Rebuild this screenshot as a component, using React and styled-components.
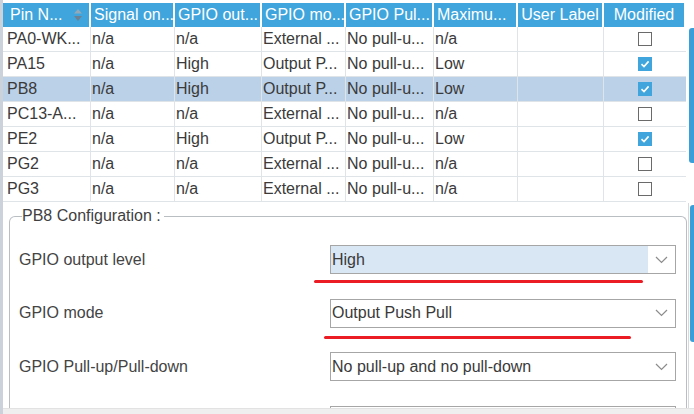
import React from 'react';
import styled, { createGlobalStyle } from 'styled-components';

const GlobalStyle = createGlobalStyle`
  html, body {
    margin: 0;
    padding: 0;
    background: #ffffff;
  }
  body {
    font-family: "Liberation Sans", Arial, sans-serif;
  }
`;

const columns = [
  { title: 'Pin N...', width: 88, sort: true },
  { title: 'Signal on...', width: 84 },
  { title: 'GPIO out...', width: 87 },
  { title: 'GPIO mo...', width: 84 },
  { title: 'GPIO Pul...', width: 88 },
  { title: 'Maximu...', width: 84 },
  { title: 'User Label', width: 86, center: true },
  { title: 'Modified', width: 82, center: true },
];

const rows = [
  { cells: ['PA0-WK...', 'n/a', 'n/a', 'External ...', 'No pull-u...', 'n/a', ''], modified: false },
  { cells: ['PA15', 'n/a', 'High', 'Output P...', 'No pull-u...', 'Low', ''], modified: true },
  { cells: ['PB8', 'n/a', 'High', 'Output P...', 'No pull-u...', 'Low', ''], modified: true, selected: true },
  { cells: ['PC13-A...', 'n/a', 'n/a', 'External ...', 'No pull-u...', 'n/a', ''], modified: false },
  { cells: ['PE2', 'n/a', 'High', 'Output P...', 'No pull-u...', 'Low', ''], modified: true },
  { cells: ['PG2', 'n/a', 'n/a', 'External ...', 'No pull-u...', 'n/a', ''], modified: false },
  { cells: ['PG3', 'n/a', 'n/a', 'External ...', 'No pull-u...', 'n/a', ''], modified: false },
];

// the last row is scrolled out of view: only the top edge of its box shows
const settings = [
  { id: 'level', label: 'GPIO output level', value: 'High', focused: true },
  { id: 'mode', label: 'GPIO mode', value: 'Output Push Pull' },
  { id: 'pull', label: 'GPIO Pull-up/Pull-down', value: 'No pull-up and no pull-down' },
  { id: 'speed', label: '', value: '' },
];

const SortIcon = () => (
  <svg width="10" height="14" viewBox="0 0 10 14">
    <path d="M1 5.5 L5 1 L9 5.5 Z" fill="#93a9ba" />
    <path d="M1 8 L9 8 L5 13 Z" fill="#6d8192" />
  </svg>
);

const Chevron = () => (
  <svg width="13" height="8" viewBox="0 0 13 8">
    <polyline points="1,1 6.5,6.5 12,1" fill="none" stroke="#8c8c8c" strokeWidth="1.2" />
  </svg>
);

const Check = () => (
  <svg width="12" height="12" viewBox="0 0 12 12">
    <polyline points="2.5,6.2 5,8.6 9.6,3.4" fill="none" stroke="#ffffff" strokeWidth="1.6" />
  </svg>
);

const App = () => {
  return (
    <>
      <GlobalStyle />
      <Screen>
        <LeftEdge />
        <Main>
          <TablePane>
            <Table>
              <HeaderRow>
                {columns.map((c) => (
                  <HeaderCell key={c.title} $w={c.width} $center={c.center} $first={c.sort}>
                    <span>{c.title}</span>
                    {c.sort && <SortIcon />}
                  </HeaderCell>
                ))}
              </HeaderRow>
              {rows.map((r) => (
                <Row key={r.cells[0]} $selected={r.selected}>
                  {r.cells.map((text, i) => (
                    <Cell key={i} $w={columns[i].width} $first={i === 0}>
                      {text}
                    </Cell>
                  ))}
                  <CheckCell $w={columns[7].width}>
                    <Checkbox $checked={r.modified}>{r.modified && <Check />}</Checkbox>
                  </CheckCell>
                </Row>
              ))}
            </Table>
            <TableTrack>
              <TableThumb />
            </TableTrack>
          </TablePane>

          <ConfigPane>
            <ConfigBody>
              <Group>
                <Legend>PB8 Configuration :</Legend>
                <Form>
                  {settings.map((s) => (
                    <React.Fragment key={s.id}>
                      <Label>{s.label}</Label>
                      <Select>
                        <SelectValue $focused={s.focused}>{s.value}</SelectValue>
                        <SelectArrow>
                          <Chevron />
                        </SelectArrow>
                      </Select>
                    </React.Fragment>
                  ))}
                </Form>
              </Group>
            </ConfigBody>
            <ConfigTrack>
              <ConfigThumb />
            </ConfigTrack>
          </ConfigPane>
          <BottomBar />
        </Main>

        <Underline style={{ left: 314, top: 280, width: 329 }} />
        <Underline style={{ left: 324, top: 336, width: 307 }} />
      </Screen>
    </>
  );
};

const Screen = styled.div`
  position: relative;
  width: 694px;
  height: 414px;
  display: flex;
  overflow: hidden;
  background: #ffffff;
  color: #3a3a3a;
  font-size: 16px;
`;

const LeftEdge = styled.div`
  flex: none;
  width: 3px;
  background: #cbd2d9;
`;

const Main = styled.div`
  flex: 1;
  min-width: 0;
  display: flex;
  flex-direction: column;
`;

const TablePane = styled.div`
  flex: none;
  height: 203px;
  display: flex;
  padding-top: 3px;
  box-sizing: border-box;
`;

const Table = styled.div`
  width: 683px;
  display: flex;
  flex-direction: column;
`;

const HeaderRow = styled.div`
  display: flex;
  height: 24px;
`;

const HeaderCell = styled.div`
  width: ${(p) => p.$w}px;
  box-sizing: border-box;
  border-right: 2px solid #ffffff;
  background: #3fa5dc;
  color: #ffffff;
  display: flex;
  align-items: center;
  justify-content: ${(p) => (p.$center ? 'center' : 'space-between')};
  padding: 0 ${(p) => (p.$first ? '6px' : '0')} 0 ${(p) => (p.$center ? '0' : p.$first ? '7px' : '3px')};
  white-space: nowrap;
  overflow: hidden;
`;

const Row = styled.div`
  display: flex;
  height: 25px;
  box-sizing: border-box;
  border-bottom: 1px solid #dfe4e9;
  background: ${(p) => (p.$selected ? '#bad1e8' : '#ffffff')};
`;

const Cell = styled.div`
  width: ${(p) => p.$w}px;
  box-sizing: border-box;
  border-right: 1px solid #dfe4e9;
  padding-left: ${(p) => (p.$first ? '4px' : '1px')};
  display: flex;
  align-items: center;
  white-space: nowrap;
`;

const CheckCell = styled(Cell)`
  justify-content: center;
  padding-left: 0;
  border-right: none;
`;

const Checkbox = styled.div`
  width: 14px;
  height: 14px;
  box-sizing: border-box;
  display: flex;
  align-items: center;
  justify-content: center;
  border: ${(p) => (p.$checked ? 'none' : '1.5px solid #6a6a6a')};
  background: ${(p) => (p.$checked ? '#3fa5dc' : '#ffffff')};
`;

const TableTrack = styled.div`
  flex: 1;
  padding: 25px 0 0 3px;
`;

const TableThumb = styled.div`
  width: 5px;
  height: 135px;
  background: #3a9fd8;
  border-radius: 3px 0 0 3px;
`;

const ConfigPane = styled.div`
  flex: 1;
  min-height: 0;
  display: flex;
`;

const ConfigBody = styled.div`
  flex: 1;
  min-width: 0;
  overflow: hidden;
  padding: 4px 1px 0 6px;
`;

const Group = styled.fieldset`
  margin: 0;
  padding: 0 10px 0 9px;
  border: 1px solid #b9bec3;
  border-bottom: none;
  border-radius: 6px 6px 0 0;
  min-width: 0;
`;

const Legend = styled.legend`
  margin-left: 3px;
  padding: 0 3px 0 0;
  line-height: 18px;
  color: #3f3f3f;
`;

const Form = styled.div`
  display: grid;
  grid-template-columns: 1fr 346px;
  row-gap: 24.5px;
  align-items: center;
  padding-top: 20px;
`;

const Label = styled.div`
  color: #444444;
  white-space: nowrap;
`;

const Select = styled.div`
  height: 29px;
  box-sizing: border-box;
  border: 1px solid #a6a6a6;
  display: flex;
  background: #ffffff;
`;

const SelectValue = styled.div`
  flex: 1;
  display: flex;
  align-items: center;
  padding-left: 1px;
  background: ${(p) => (p.$focused ? '#d9e7f5' : '#ffffff')};
  color: #3a3a3a;
  white-space: nowrap;
`;

const SelectArrow = styled.div`
  width: 27px;
  display: flex;
  align-items: center;
  justify-content: center;
`;

const ConfigTrack = styled.div`
  flex: none;
  width: 6px;
  box-sizing: border-box;
  border-left: 1px solid #d6dadd;
  padding: 2px 0 0 1px;
`;

const ConfigThumb = styled.div`
  width: 4px;
  height: 137px;
  background: #3a9fd8;
  border-radius: 3px 0 0 3px;
`;

const BottomBar = styled.div`
  flex: none;
  height: 5px;
  background: #efefef;
  border-top: 1px solid #e2e2e2;
`;

const Underline = styled.div`
  position: absolute;
  height: 3px;
  border-radius: 2px;
  background: #ec1c24;
`;

export default App;
